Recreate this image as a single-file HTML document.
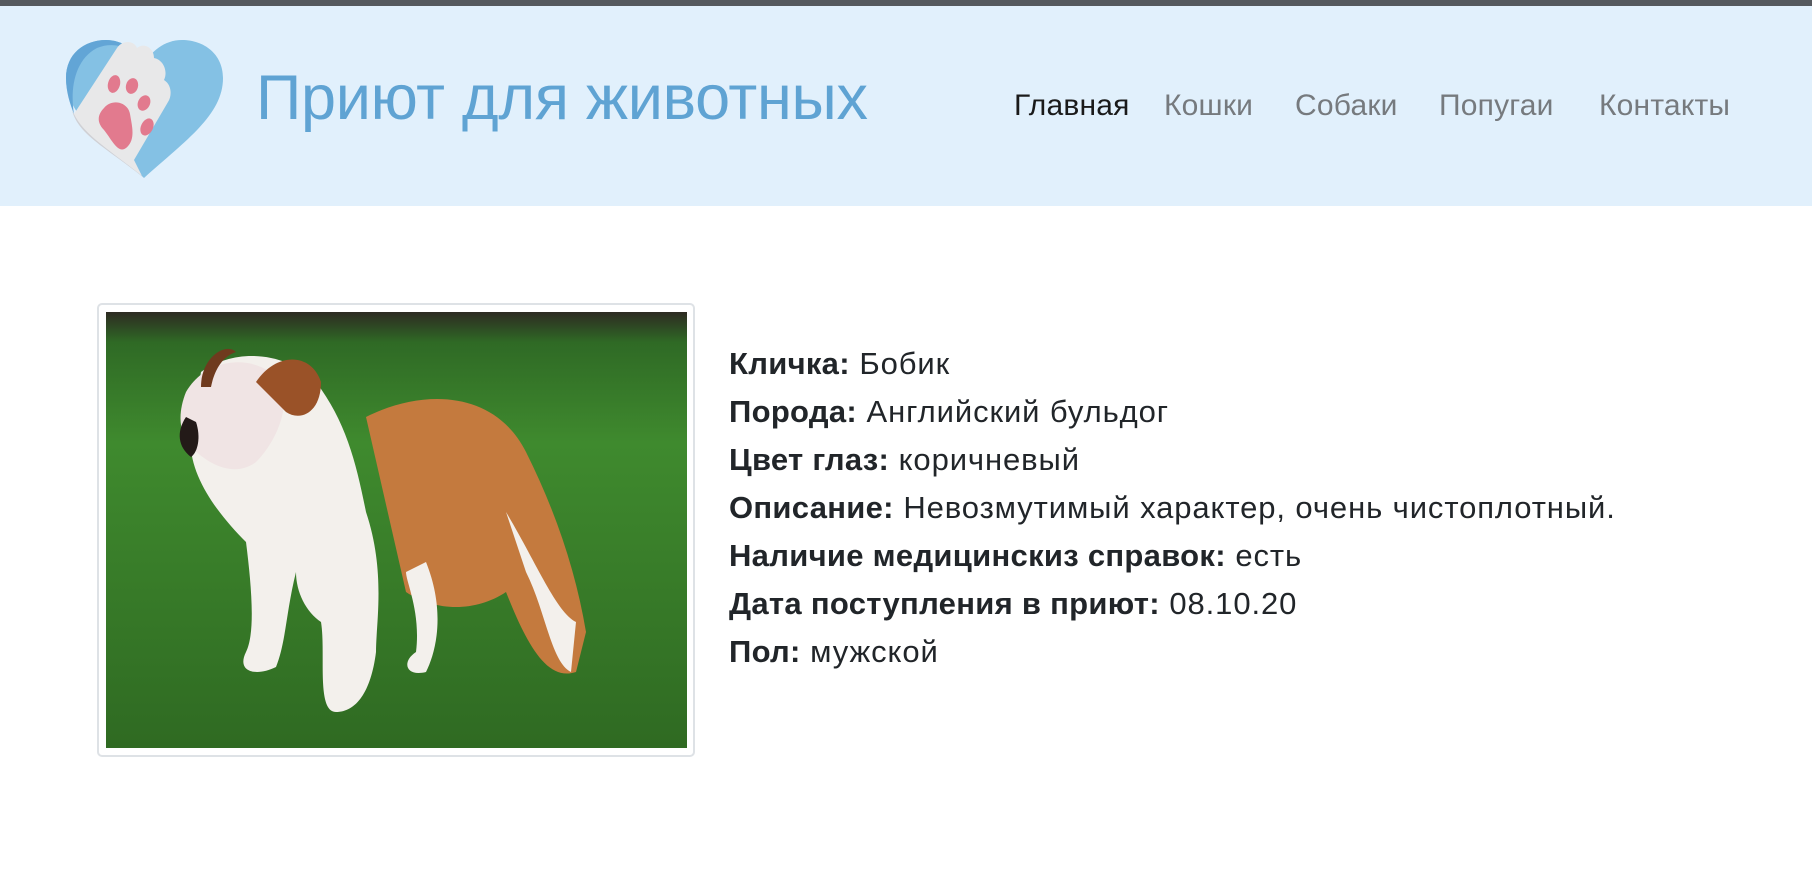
<!DOCTYPE html>
<html><head><meta charset="utf-8"><style>
*{margin:0;padding:0;box-sizing:border-box}
body{width:1812px;height:890px;background:#fff;font-family:"Liberation Sans","DejaVu Sans",sans-serif;position:relative;overflow:hidden}
.top{position:absolute;left:0;top:0;width:1812px;height:6px;background:#55595e}
.hdr{position:absolute;left:0;top:6px;width:1812px;height:200px;background:#e1f0fc}
.logo{position:absolute;left:62px;top:40px}
.title{position:absolute;left:256px;top:62px;font-size:63px;color:#5fa3d3;white-space:nowrap;letter-spacing:-0.3px}
.nav{position:absolute;top:89px;font-size:30px;color:#767a7e;white-space:nowrap;letter-spacing:0.2px}
.frame{position:absolute;left:97px;top:303px;width:598px;height:454px;border:2px solid #dee2e6;border-radius:5px;background:#fff}
.pic{position:absolute;left:106px;top:312px;width:581px;height:436px}
.info{position:absolute;left:729px;top:340px;font-size:31px;color:#212529;line-height:48px;letter-spacing:0.9px;white-space:nowrap}
.info b{font-weight:bold;letter-spacing:0.3px}
</style></head><body>
<div class="top"></div>
<div class="hdr"></div>
<svg class="logo" width="165" height="140" viewBox="0 0 165 140">
<path d="M82 138 C40 100 4 75 4 38 C4 14 22 0 44 0 C62 0 75 12 82 24 C89 12 102 0 120 0 C142 0 161 14 161 38 C161 75 124 100 82 138Z" fill="#84c1e4"/>
<path d="M82 24 C75 12 62 0 44 0 C22 0 4 14 4 38 C4 52 8 64 12 74 C8 50 12 20 35 8 C55 0 72 10 82 24Z" fill="#62a5d6"/>
<path d="M12 74 L55 8 C60 0 72 0 75 8 C82 2 92 8 92 18 C102 20 106 32 102 40 C110 45 110 56 106 62 L72 120 L80 136 C48 110 22 95 12 74Z" fill="#e8e8e9"/>
<path d="M12 74 C22 95 48 110 80 136 L82 138 C45 108 16 95 10 70Z" fill="#d0d0d4"/>
<ellipse cx="52" cy="44" rx="6" ry="9" fill="#e27a8e" transform="rotate(15 52 44)"/>
<ellipse cx="70" cy="46" rx="6" ry="8" fill="#e27a8e" transform="rotate(15 70 46)"/>
<ellipse cx="82" cy="63" rx="6" ry="8" fill="#e27a8e" transform="rotate(25 82 63)"/>
<ellipse cx="85" cy="87" rx="6" ry="9" fill="#e27a8e" transform="rotate(25 85 87)"/>
<path d="M42 68 C50 58 66 62 68 74 C70 86 74 100 64 108 C56 114 50 100 42 90 C34 82 36 74 42 68Z" fill="#e27a8e"/>
</svg>
<div class="title">Приют для животных</div>
<div class="nav" style="left:1014px;color:#1a1a1a">Главная</div>
<div class="nav" style="left:1164px">Кошки</div>
<div class="nav" style="left:1295px">Собаки</div>
<div class="nav" style="left:1439px">Попугаи</div>
<div class="nav" style="left:1599px">Контакты</div>
<div class="frame"></div>
<svg class="pic" viewBox="0 0 581 436" preserveAspectRatio="none">
<defs><linearGradient id="g" x1="0" y1="0" x2="0" y2="1"><stop offset="0" stop-color="#2d2a22"/><stop offset="0.07" stop-color="#2f6a25"/><stop offset="0.3" stop-color="#3f8a2e"/><stop offset="1" stop-color="#2f6a22"/></linearGradient></defs>
<rect width="581" height="436" fill="url(#g)"/>
<path d="M260 105 C320 75 390 80 420 140 C450 200 470 260 480 320 L470 360 C440 370 420 330 400 280 C370 300 330 300 300 280 Z" fill="#c47a3e"/>
<path d="M95 60 C130 35 180 40 210 70 C240 110 250 150 260 200 C280 260 270 310 270 340 C265 380 250 400 230 400 C210 400 220 340 215 310 C200 300 190 280 190 260 C180 300 180 330 170 355 C150 365 130 360 140 340 C150 320 145 270 140 230 C110 200 80 160 85 120 Z" fill="#f3f0ec"/>
<path d="M80 80 C100 45 150 40 175 70 C185 95 170 130 150 150 C130 165 105 155 85 135 C72 120 72 100 80 80Z" fill="#f0e4e4"/>
<path d="M150 70 C170 40 205 40 215 70 C215 100 195 110 180 100 Z" fill="#9a5228"/>
<path d="M95 75 C95 45 120 30 130 40 C115 45 108 60 105 75Z" fill="#6f3a1e"/>
<path d="M80 105 C70 120 72 135 85 145 C92 140 95 125 90 110Z" fill="#231a18"/>
<path d="M400 200 C430 250 450 300 470 310 L465 360 C445 350 440 300 420 260Z" fill="#f3f0ec"/>
<path d="M320 250 C340 300 330 340 320 360 C300 365 295 350 310 340 C315 300 300 270 300 260Z" fill="#f3f0ec"/>
</svg>
<div class="info">
<div><b>Кличка:</b> Бобик</div>
<div><b>Порода:</b> Английский бульдог</div>
<div><b>Цвет глаз:</b> коричневый</div>
<div><b>Описание:</b> Невозмутимый характер, очень чистоплотный.</div>
<div><b>Наличие медицинскиз справок:</b> есть</div>
<div><b>Дата поступления в приют:</b> 08.10.20</div>
<div><b>Пол:</b> мужской</div>
</div>
</body></html>
